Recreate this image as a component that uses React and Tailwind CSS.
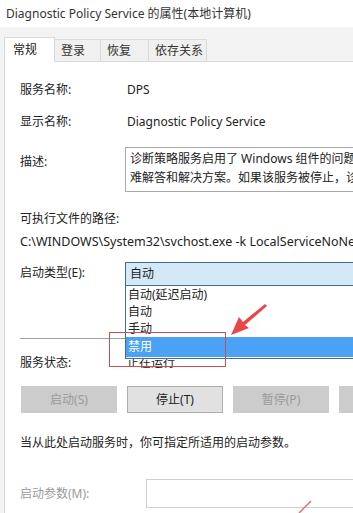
import React from 'react';

const font = { fontFamily: '"Noto Sans", "Noto Sans CJK SC", sans-serif' };

const Row = ({ label, children, className = '' }) => (
    <div className={`flex items-center h-[20px] ${className}`}>
        <div className="w-[107px] shrink-0">{label}</div>
        <div className="whitespace-nowrap">{children}</div>
    </div>
);

const Btn = ({ children, disabled }) => (
    <div
        className={`w-[96px] h-[27px] shrink-0 flex items-center justify-center border ${
            disabled ? 'bg-[#cccccc] border-[#cccccc] text-[#9a9a9a]' : 'bg-[#e1e1e1] border-[#adadad] text-[#222]'
        }`}
    >
        {children}
    </div>
);

export default function App() {
    const tabs = [
        { name: '登录', w: 'w-[46px]' },
        { name: '恢复', w: 'w-[48px]' },
        { name: '依存关系', w: 'w-[58px]' }
    ];
    const options = ['自动(延迟启动)', '自动', '手动'];

    return (
        <div className="w-[353px] h-[513px] overflow-hidden bg-[#f3f3f3] text-[12px] text-[#222] relative" style={font}>
            {/* Title bar */}
            <div className="h-[27px] bg-white flex items-center pl-[6px] text-[12px] text-[#333] whitespace-nowrap">
                Diagnostic Policy Service 的属性(本地计算机)
            </div>

            {/* Tabs */}
            <div className="h-[34px] pl-[4px] flex items-end whitespace-nowrap">
                <div className="w-[51px] h-[25px] bg-white border border-b-0 border-[#d9d9d9] flex items-center pl-[8px] relative top-[1px]">
                    常规
                </div>
                {tabs.map((t, i) => (
                    <div
                        key={i}
                        className={`${t.w} h-[22px] bg-[#f0f0f0] border border-l-0 border-b-0 border-[#d9d9d9] flex items-center pl-[6px] text-[#333]`}
                    >
                        {t.name}
                    </div>
                ))}
            </div>

            {/* Panel */}
            <div className="ml-[4px] w-[400px] h-[460px] bg-white border-l border-t border-[#d9d9d9] pl-[15px] pt-[18px]">
                <Row label="服务名称:">DPS</Row>
                <Row label="显示名称:" className="mt-[12px]">Diagnostic Policy Service</Row>

                <div className="flex mt-[15px]">
                    <div className="w-[105px] shrink-0 pt-[6px]">描述:</div>
                    <div className="w-[300px] h-[45px] border border-[#a9a9a9] pl-[4px] pt-[1px] leading-[19px] whitespace-nowrap">
                        <div>诊断策略服务启用了 Windows 组件的问题检测</div>
                        <div>难解答和解决方案。如果该服务被停止，诊断</div>
                    </div>
                </div>

                <div className="mt-[17px] h-[20px] flex items-center">可执行文件的路径:</div>
                <div className="mt-[3px] h-[20px] flex items-center whitespace-nowrap text-[12.5px]">
                    C:\WINDOWS\System32\svchost.exe -k LocalServiceNoNetwork
                </div>

                {/* Startup type */}
                <div className="flex mt-[10px] relative">
                    <div className="w-[105px] shrink-0 pt-[2px]">启动类型(E):</div>
                    <div className="w-[300px] h-[24px] bg-[#d5e8f8] border border-[#3b6f9a] pl-[4px] flex items-center">自动</div>

                    {/* Open dropdown list */}
                    <div className="absolute left-[105px] top-[24px] w-[300px] h-[73px] bg-white border border-[#3b6f9a] border-t-0 z-10 flex flex-col">
                        {options.map((o, i) => (
                            <div key={i} className="h-[17px] pl-[2px] flex items-center">
                                {o}
                            </div>
                        ))}
                        <div className="h-[20px] pl-[2px] flex items-center bg-[#4ba1f4] text-white">禁用</div>
                    </div>
                </div>

                <div className="mt-[52px] h-px bg-[#a0a0a0] w-[380px]" />

                <Row label="服务状态:" className="mt-[14px]">正在运行</Row>

                <div className="flex gap-[10px] mt-[13px] ml-[1px]">
                    <Btn disabled>启动(S)</Btn>
                    <Btn>停止(T)</Btn>
                    <Btn disabled>暂停(P)</Btn>
                    <Btn disabled>恢复(R)</Btn>
                </div>

                <div className="mt-[20px] h-[20px] flex items-center whitespace-nowrap">
                    当从此处启动服务时，你可指定所适用的启动参数。
                </div>

                <div className="flex items-center mt-[26px]">
                    <div className="w-[126px] shrink-0 text-[#9a9a9a]">启动参数(M):</div>
                    <div className="w-[260px] h-[29px] border border-[#cfcfcf]" />
                </div>
            </div>

            {/* Annotation: red box */}
            <div className="absolute left-[109px] top-[332px] w-[117px] h-[35px] border border-[#c9504f] z-20" />

            {/* Annotation: red arrows */}
            <svg className="absolute left-0 top-0 z-20 pointer-events-none" width="353" height="513" viewBox="0 0 353 513">
                <polygon points="267,306 265,304 243,322 239,317 231,335 249,328 245,325" fill="#ea4648" />
                <line x1="311" y1="501" x2="299" y2="513" stroke="#e87070" strokeWidth="1.5" />
            </svg>
        </div>
    );
}
